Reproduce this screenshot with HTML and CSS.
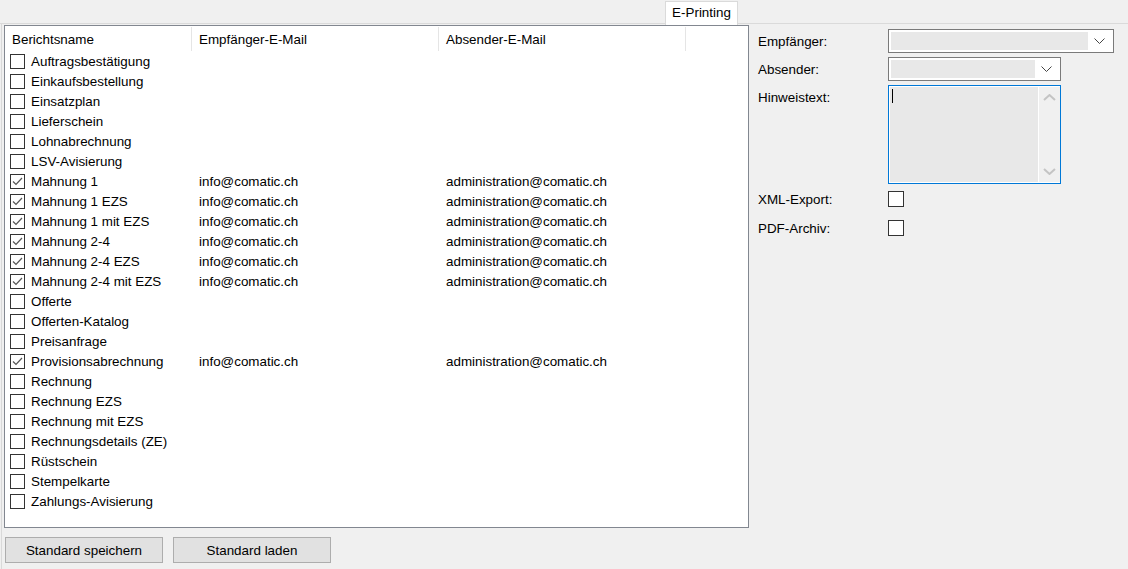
FILE: index.html
```html
<!DOCTYPE html>
<html lang="de">
<head>
    <meta charset="UTF-8">
    <title>E-Printing</title>
    <link rel="stylesheet" href="styles.css">
</head>
<body>
    <div class="tabstrip">
        <div class="tab">E-Printing</div>
    </div>
    <div class="page">
        <div class="left">
            <div class="listbox">
                <div class="list-head">
                    <div class="head-cell">Berichtsname</div>
                    <div class="head-cell">Empfänger-E-Mail</div>
                    <div class="head-cell">Absender-E-Mail</div>
                    <div class="head-cell last"></div>
                </div>
                <div class="rows">
                    <div class="row"><div class="name"><span class="check"></span>Auftragsbestätigung</div><div></div><div></div></div>
                    <div class="row"><div class="name"><span class="check"></span>Einkaufsbestellung</div><div></div><div></div></div>
                    <div class="row"><div class="name"><span class="check"></span>Einsatzplan</div><div></div><div></div></div>
                    <div class="row"><div class="name"><span class="check"></span>Lieferschein</div><div></div><div></div></div>
                    <div class="row"><div class="name"><span class="check"></span>Lohnabrechnung</div><div></div><div></div></div>
                    <div class="row"><div class="name"><span class="check"></span>LSV-Avisierung</div><div></div><div></div></div>
                    <div class="row"><div class="name"><span class="check checked"></span>Mahnung 1</div><div class="mail">info@comatic.ch</div><div class="mail">administration@comatic.ch</div></div>
                    <div class="row"><div class="name"><span class="check checked"></span>Mahnung 1 EZS</div><div class="mail">info@comatic.ch</div><div class="mail">administration@comatic.ch</div></div>
                    <div class="row"><div class="name"><span class="check checked"></span>Mahnung 1 mit EZS</div><div class="mail">info@comatic.ch</div><div class="mail">administration@comatic.ch</div></div>
                    <div class="row"><div class="name"><span class="check checked"></span>Mahnung 2-4</div><div class="mail">info@comatic.ch</div><div class="mail">administration@comatic.ch</div></div>
                    <div class="row"><div class="name"><span class="check checked"></span>Mahnung 2-4 EZS</div><div class="mail">info@comatic.ch</div><div class="mail">administration@comatic.ch</div></div>
                    <div class="row"><div class="name"><span class="check checked"></span>Mahnung 2-4 mit EZS</div><div class="mail">info@comatic.ch</div><div class="mail">administration@comatic.ch</div></div>
                    <div class="row"><div class="name"><span class="check"></span>Offerte</div><div></div><div></div></div>
                    <div class="row"><div class="name"><span class="check"></span>Offerten-Katalog</div><div></div><div></div></div>
                    <div class="row"><div class="name"><span class="check"></span>Preisanfrage</div><div></div><div></div></div>
                    <div class="row"><div class="name"><span class="check checked"></span>Provisionsabrechnung</div><div class="mail">info@comatic.ch</div><div class="mail">administration@comatic.ch</div></div>
                    <div class="row"><div class="name"><span class="check"></span>Rechnung</div><div></div><div></div></div>
                    <div class="row"><div class="name"><span class="check"></span>Rechnung EZS</div><div></div><div></div></div>
                    <div class="row"><div class="name"><span class="check"></span>Rechnung mit EZS</div><div></div><div></div></div>
                    <div class="row"><div class="name"><span class="check"></span>Rechnungsdetails (ZE)</div><div></div><div></div></div>
                    <div class="row"><div class="name"><span class="check"></span>Rüstschein</div><div></div><div></div></div>
                    <div class="row"><div class="name"><span class="check"></span>Stempelkarte</div><div></div><div></div></div>
                    <div class="row"><div class="name"><span class="check"></span>Zahlungs-Avisierung</div><div></div><div></div></div>
                </div>
            </div>
            <div class="buttons">
                <button class="btn">Standard speichern</button>
                <button class="btn">Standard laden</button>
            </div>
        </div>

        <div class="form">
            <div class="field">
                <label>Empfänger:</label>
                <div class="combo wide">
                    <div class="combo-value"></div>
                    <svg class="chevron" width="11" height="6" viewBox="0 0 11 6"><path d="M0.5 0.5 L5.5 5.5 L10.5 0.5" fill="none" stroke="#444" stroke-width="1"/></svg>
                </div>
            </div>
            <div class="field">
                <label>Absender:</label>
                <div class="combo">
                    <div class="combo-value"></div>
                    <svg class="chevron" width="11" height="6" viewBox="0 0 11 6"><path d="M0.5 0.5 L5.5 5.5 L10.5 0.5" fill="none" stroke="#444" stroke-width="1"/></svg>
                </div>
            </div>
            <div class="field top">
                <label>Hinweistext:</label>
                <div class="memo">
                    <div class="memo-text"><span class="caret"></span></div>
                    <div class="scrollbar">
                        <svg width="13" height="7" viewBox="0 0 13 7"><path d="M1 6 L6.5 1 L12 6" fill="none" stroke="#c4c4c4" stroke-width="2"/></svg>
                        <svg width="13" height="7" viewBox="0 0 13 7"><path d="M1 1 L6.5 6 L12 1" fill="none" stroke="#c4c4c4" stroke-width="2"/></svg>
                    </div>
                </div>
            </div>
            <div class="field check-field xml">
                <label>XML-Export:</label>
                <span class="check"></span>
            </div>
            <div class="field check-field pdf">
                <label>PDF-Archiv:</label>
                <span class="check"></span>
            </div>
        </div>
    </div>
</body>
</html>
```

FILE: styles.css
```css
* {
    box-sizing: border-box;
}

body {
    margin: 0;
    width: 1128px;
    height: 569px;
    overflow: hidden;
    background: #f0f0f0;
    font-family: "Liberation Sans", Arial, sans-serif;
    font-size: 13.4px;
    color: #000;
}

.tabstrip {
    height: 24px;
    border-bottom: 1px solid #dadada;
    padding-left: 665px;
    display: flex;
    align-items: flex-start;
}

.tab {
    width: 73px;
    height: 24px;
    margin-top: 1px;
    background: #ffffff;
    border: 1px solid #dadada;
    border-bottom: none;
    text-align: center;
    line-height: 21px;
}

.page {
    display: flex;
    height: 545px;
    margin-left: 1px;
    border-left: 1px solid #d9d9d9;
}

.left {
    padding-left: 2px;
    padding-top: 1px;
}

.listbox {
    width: 745px;
    height: 503px;
    background: #ffffff;
    border: 1px solid #828790;
}

.list-head {
    display: grid;
    grid-template-columns: 187px 247px 247px 1fr;
    height: 25px;
}

.head-cell {
    padding: 0 0 0 7px;
    line-height: 25px;
    height: 24px;
    margin-top: 1px;
    border-right: 1px solid #e5e5e5;
}

.head-cell.last {
    border-right: none;
}

.row {
    display: grid;
    grid-template-columns: 187px 247px 247px;
    height: 20px;
    align-items: center;
}

.name {
    display: flex;
    align-items: center;
    padding-left: 5px;
    white-space: nowrap;
}

.mail {
    padding-left: 7px;
}

.check {
    display: inline-block;
    width: 15px;
    height: 15px;
    border: 1px solid #333333;
    background: #ffffff;
    margin-right: 6px;
    flex-shrink: 0;
}

.check.checked {
    background: #ffffff url("data:image/svg+xml,%3Csvg xmlns='http://www.w3.org/2000/svg' width='13' height='13' viewBox='0 0 13 13'%3E%3Cpath d='M2 6.5 L5 9.5 L11 3' fill='none' stroke='%23555' stroke-width='1.2'/%3E%3C/svg%3E") no-repeat center;
}

.buttons {
    display: flex;
    gap: 10px;
    margin-top: 9px;
    padding-left: 1px;
}

.btn {
    width: 158px;
    height: 26px;
    background: #e1e1e1;
    border: 1px solid #adadad;
    font-family: "Liberation Sans", Arial, sans-serif;
    font-size: 13.4px;
    color: #000;
    padding: 0;
}

.form {
    display: flex;
    flex-direction: column;
    padding-top: 5px;
    padding-left: 9px;
}

.field {
    display: flex;
    align-items: center;
    margin-bottom: 4px;
}

.field label {
    width: 130px;
}

.field.top {
    align-items: flex-start;
}

.field.top label {
    padding-top: 5px;
}

.combo {
    width: 173px;
    height: 24px;
    background: #ffffff;
    border: 1px solid #7a7a7a;
    padding: 2px;
    display: flex;
    align-items: center;
}

.combo.wide {
    width: 226px;
}

.combo-value {
    flex: 1;
    height: 18px;
    background: #e8e8e8;
}

.chevron {
    margin: 0 6px 0 6px;
}

.memo {
    width: 173px;
    height: 99px;
    border: 1px solid #0078d7;
    background: #ffffff;
    padding: 1px 0 1px 1px;
    display: flex;
}

.memo-text {
    flex: 1;
    background: #e8e8e8;
    padding: 2px 0 0 2px;
}

.caret {
    display: block;
    width: 1px;
    height: 14px;
    background: #000;
}

.scrollbar {
    width: 21px;
    margin-left: 1px;
    background: #f0f0f0;
    display: flex;
    flex-direction: column;
    justify-content: space-between;
    align-items: center;
    padding: 7px 0 7px;
}

.check-field {
    margin-bottom: 0;
}

.check-field .check {
    width: 16px;
    height: 16px;
    margin-right: 0;
}

.check-field.xml {
    margin-top: 3px;
}

.check-field.pdf {
    margin-top: 13px;
}
```
